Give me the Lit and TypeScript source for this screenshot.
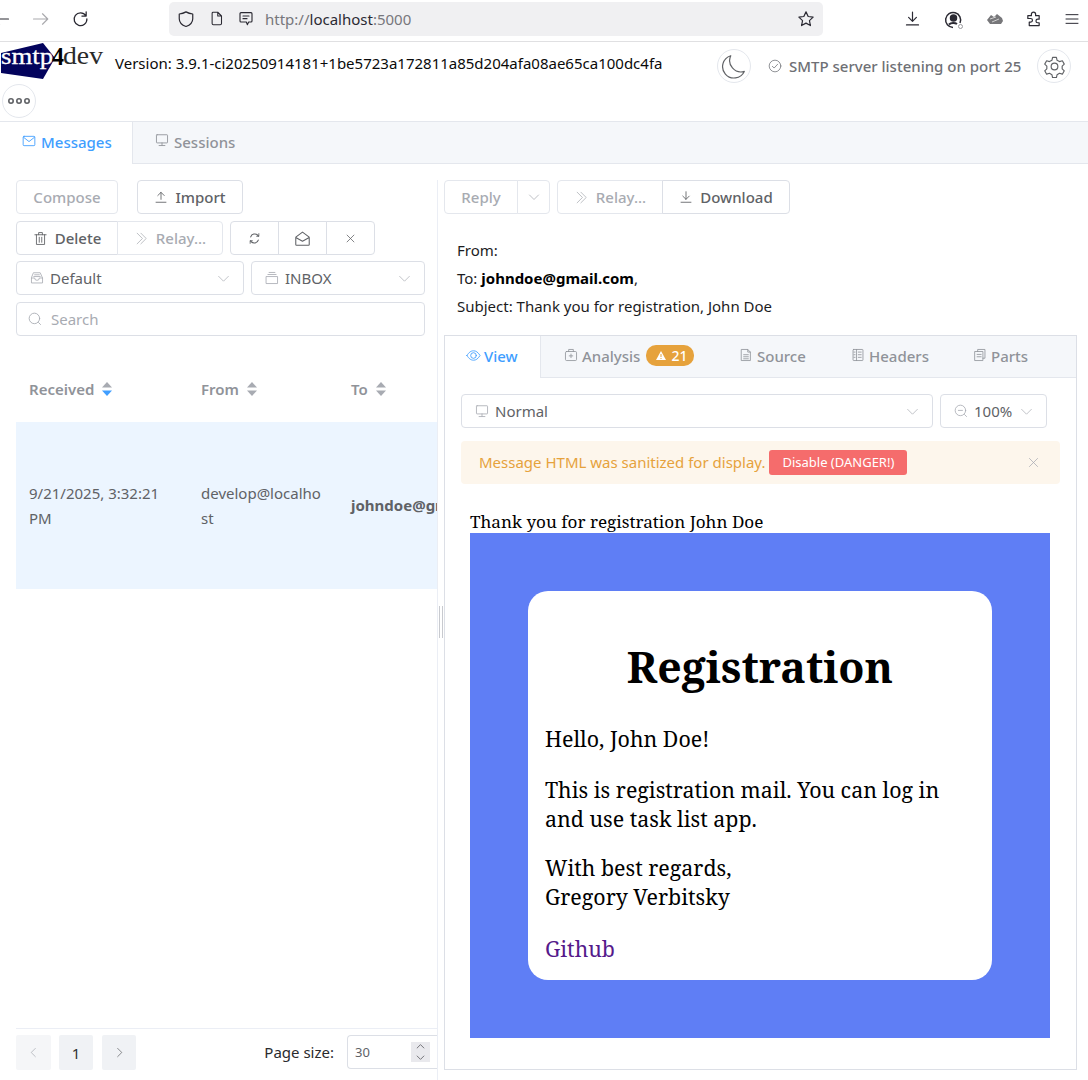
import { LitElement, html, css, svg } from 'lit';
import { customElement } from 'lit/decorators.js';

// outline icon on a 24 box, stroke follows currentColor
const icon = (paths: unknown, size = 14, sw = 1.5) => html`<svg class="ic" width=${size} height=${size} viewBox="0 0 24 24" fill="none" stroke="currentColor" stroke-width=${sw} stroke-linecap="round" stroke-linejoin="round">${paths}</svg>`;

const I = {
  back: svg`<path d="M22 12H3M10 5l-7 7 7 7"/>`,
  reload: svg`<path d="M19.500 8A9 9 0 1 0 21 12.500M20 2.500V8.500H14"/>`,
  shield: svg`<path d="M12 2.500c3 1.800 5.500 2.500 9 2.800v6.200c0 5-3.500 8.500-9 10.500-5.500-2-9-5.500-9-10.500V5.300c3.500-.3 6-1 9-2.800z"/>`,
  page: svg`<path d="M5 3.500a1.500 1.500 0 0 1 1.500-1.500H14l6 6v12a2 2 0 0 1-2 2H7a2 2 0 0 1-2-2zM14 2v6h6"/>`,
  comment: svg`<path d="M3 4a1.500 1.500 0 0 1 1.500-1.500h15A1.500 1.500 0 0 1 21 4v11a1.500 1.500 0 0 1-1.500 1.500H16l-2 4-1.500-4H4.500A1.500 1.500 0 0 1 3 15zM7.500 7.500h9M7.500 11.500h6"/>`,
  star: svg`<path d="M12 2.500l2.900 6.200 6.600.8-4.900 4.600 1.300 6.700L12 17.500l-5.900 3.300 1.300-6.700-4.900-4.600 6.600-.8z"/>`,
  download: svg`<path d="M12 3v13M6.500 10.500l5.500 5.500 5.500-5.500M3.500 21h17"/>`,
  puzzle: svg`<path d="M4 8h5V6a3 3 0 1 1 6 0v2h5v5h-2a2.500 2.500 0 0 0 0 5h2v4H6v-5h2a2.500 2.500 0 0 0 0-5H4z"/>`,
  menu: svg`<path d="M3 5.500h18M3 12h18M3 18.500h18"/>`,
  moon: svg`<path d="M9 2.500A10.500 10.500 0 0 0 21.500 17 10.500 10.500 0 1 1 9 2.500z"/>`,
  check: svg`<circle cx="12" cy="12" r="10"/><path d="M7.500 12.500l3 3 6-6.500"/>`,
  gear: svg`<path d="M10 2.500h4l.7 3 2.500 1.400 3-.9 2 3.500-2.200 2.100v2.800l2.200 2.100-2 3.500-3-.9-2.500 1.400-.7 3h-4l-.7-3-2.500-1.400-3 .9-2-3.500 2.200-2.100v-2.800L1.800 9.500l2-3.500 3 .9 2.500-1.400z"/><circle cx="12" cy="12" r="3.500"/>`,
  mail: svg`<rect x="2" y="4" width="20" height="16" rx="1.500"/><path d="M2.500 5.500L12 13l9.500-7.500"/>`,
  monitor: svg`<rect x="2.500" y="3" width="19" height="14" rx="1"/><path d="M12 17v4M7 21.500h10"/>`,
  upload: svg`<path d="M12 16V4M6.500 9.500L12 4l5.500 5.500M3.500 21h17"/>`,
  trash: svg`<path d="M3 6h18M9 6V2.500h6V6M5.500 6v15.500h13V6M10 10v8M14 10v8"/>`,
  relay: svg`<path d="M5 3.500l8.500 8.500L5 20.500M11 3.500l8.500 8.500-8.500 8.500"/>`,
  refresh: svg`<path d="M5 9a7.800 7.800 0 0 1 13-3l1.500 1.500M19 15a7.800 7.800 0 0 1-13 3L4.500 16.500" stroke-width="2"/><path d="M20 3v5h-4M4 21v-5h4" stroke-width="1.500"/>`,
  open: svg`<path d="M2.500 10L12 3l9.500 7v10.500a1 1 0 0 1-1 1h-17a1 1 0 0 1-1-1zM2.500 10.500L12 16l9.500-5.500"/>`,
  close: svg`<path d="M4.500 4.500l15 15M19.500 4.500l-15 15"/>`,
  tray: svg`<path d="M6.500 3h11l4 9v8.500h-19V12zM2.500 12H8a4 4 0 0 0 8 0h5.500M8 6.500h8M6.500 9.500h11"/>`,
  folder: svg`<path d="M2.500 9.500h19v12h-19zM5 6h14M7 2.500h10"/>`,
  search: svg`<circle cx="11" cy="11" r="9"/><path d="M18 18l3.500 3.500"/>`,
  chevron: svg`<path d="M3 8l9 9 9-9"/>`,
  up: svg`<path d="M3 16l9-9 9 9"/>`,
  left: svg`<path d="M16 3l-9 9 9 9"/>`,
  right: svg`<path d="M8 3l9 9-9 9"/>`,
  eye: svg`<path d="M1.500 12C5 6.500 8 4.500 12 4.500s7 2 10.500 7.500C19 17.500 16 19.500 12 19.500S5 17.500 1.500 12z"/><circle cx="12" cy="12" r="4.500"/>`,
  analysis: svg`<rect x="2.500" y="6" width="19" height="15.500" rx="2"/><path d="M8 6V2.500h8V6M12 10.500v6M9 13.500h6"/>`,
  doc: svg`<path d="M4.500 2.500H15l4.500 4.500v14.500h-15zM15 2.500V7h4.500M8 11.500h8M8 15h8M8 18.500h8"/>`,
  headers: svg`<rect x="3.500" y="2.500" width="17" height="19" rx="1"/><path d="M9.500 2.500v19M12.500 7h5M12.500 11.500h5M12.500 16h5M5 7h2M5 11.500h2M5 16h2"/>`,
  parts: svg`<path d="M8 6V2.500h12.500v15H17M3.500 6H17v15.500H3.500zM7 11h7M7 15h7"/>`,
  zoom: svg`<circle cx="11" cy="11" r="9"/><path d="M18 18l3.500 3.500M7.500 11h7"/>`,
};

@customElement('app-root')
export class AppRoot extends LitElement {
  static styles = css`
    :host {
      display: block;
      width: 1088px;
      height: 1080px;
      overflow: hidden;
      background: #fff;
      font-family: 'Noto Sans', sans-serif;
      font-size: 15px;
      color: #606266;
    }
    * { box-sizing: border-box; }
    .ic { flex: none; display: block; }

    /* browser chrome */
    .chrome {
      height: 42px;
      border-bottom: 1px solid #e0e0e2;
      display: flex;
      align-items: center;
      color: #2b2a33;
      padding-bottom: 4px;
    }
    .nav { display: flex; align-items: center; width: 177px; margin-left: -8px; gap: 22px; flex: none; }
    .nav .off { color: #a9a9ad; }
    .urlbar {
      width: 654px;
      height: 34px;
      background: #f0f0f2;
      border-radius: 5px;
      display: flex;
      align-items: center;
      padding: 0 8px;
      gap: 14px;
      flex: none;
    }
    .url { font-size: 15px; color: #77777c; margin-left: -3px; flex: 1; }
    .url b { font-weight: 400; color: #2b2a33; }
    .tools { display: flex; align-items: center; margin-left: 81px; gap: 22.500px; }
    .pfp { width: 18px; height: 18px; display: grid; place-items: center; }
    .shoe { width: 18px; height: 12px; margin-left: 2px; margin-right: -2px; }

    /* app header */
    .head { height: 79px; padding-left: 1px; }
    .head-top { display: flex; height: 42px; }
    .logo { width: 114px; height: 40px; flex: none; }
    .version { color: #0a0a0a; padding-top: 11px; line-height: 20px; width: 602px; flex: none; white-space: nowrap; }
    .round {
      width: 34px; height: 34px; border-radius: 50%; border: 1px solid #e4e7ed;
      display: grid; place-items: center; background: #fff; color: #606266; flex: none;
    }
    .head-top .round { margin-top: 7px; }
    .status {
      display: flex; align-items: center; gap: 7px; margin: 7px 15px 0 17px; height: 34px; width: 254px; flex: none;
      white-space: nowrap; color: #6e7075; font-weight: 500;
    }
    .more { margin-left: 1px; }

    /* top tabs */
    .tabs {
      height: 43px;
      display: flex;
      background: #f5f7fa;
      border-top: 1px solid #e4e7ed;
      border-bottom: 1px solid #e4e7ed;
    }
    .tab {
      display: flex; align-items: center; gap: 5px; padding: 0 21px 2px 22px; color: #909399; font-weight: 500;
      border-right: 1px solid transparent;
    }
    .tab.on { background: #fff; color: #409eff; border-right-color: #e4e7ed; height: 42px; width: 133px; }
    .tab .ic { margin-top: -3px; }
    .tab + .tab { padding-left: 22px; }

    .main { display: flex; height: 916px; }
    .left {
      width: 438px; flex: none; border-right: 1px solid #ebeef5; padding: 0 0 10px 16px;
      display: flex; flex-direction: column; overflow: hidden; margin-top: 16px;
    }
    .splitter { width: 6px; flex: none; display: flex; align-items: center; justify-content: center; }
    .handle { width: 4px; height: 32px; border-left: 1px solid #c8cacf; border-right: 1px solid #c8cacf; }
    .right { width: 633px; flex: none; padding-top: 16px; display: flex; flex-direction: column; }

    .row { display: flex; gap: 7px; margin-bottom: 7px; width: 409px; }
    .row.tight { margin-bottom: 6px; }
    .btn {
      height: 34px; padding: 0 12px; display: flex; align-items: center; justify-content: center; gap: 7px;
      border: 1px solid #dcdfe6; border-radius: 4px; background: #fff; color: #606266; white-space: nowrap; font-weight: 500;
    }
    .btn.dis { color: #a8abb2; border-color: #e4e7ed; }
    .group { display: flex; }
    .group .btn { border-radius: 0; margin-left: -1px; }
    .group .btn:first-child { border-radius: 4px 0 0 4px; margin-left: 0; }
    .group .btn:last-child { border-radius: 0 4px 4px 0; }
    .select {
      height: 34px; border: 1px solid #dcdfe6; border-radius: 4px; display: flex; align-items: center;
      padding: 0 13px; gap: 6px; color: #606266;
    }
    .select .ic:first-child { color: #a8abb2; }
    .select .chev { margin-left: auto; color: #a8abb2; }
    .search { color: #a8abb2; width: 409px; margin-bottom: 20px; padding-left: 11px; gap: 9px; }

    .thead, .tr { display: grid; grid-template-columns: 172px 150px 200px; width: 522px; }
    .thead { height: 66px; align-items: center; font-weight: 600; color: #909399; }
    .thead > div { padding-left: 13px; display: flex; align-items: center; gap: 8px; }
    .sort { display: block; }
    .tr { height: 167px; align-items: center; background: #ecf5ff; line-height: 25px; }
    .tr > div { padding: 0 13px; }
    .tr .from { word-break: break-all; }
    .tr .to { font-weight: 700; white-space: nowrap; }
    .spacer { flex: 1; }
    .pager { border-top: 1px solid #ebeef5; padding-top: 6px; display: flex; align-items: flex-start; height: 42px; }
    .pg {
      width: 34px; height: 35px; background: #f0f2f5; border-radius: 2px; display: grid; place-items: center;
      margin-right: 9px; color: #303133;
    }
    .pg.dis { background: #f5f6f8; color: #a8abb2; width: 35px; margin-right: 8px; }
    .pg.arrow { color: #606266; margin-right: 0; }
    .size-label { margin: 0 13px 0 auto; line-height: 35px; color: #2a2b2e; }
    .size {
      width: 90px; height: 34px; border: 1px solid #dcdfe6; border-radius: 4px 0 0 4px; border-right: 0;
      display: flex; align-items: center; padding-left: 7px; font-size: 13px; color: #606266;
    }
    .spin {
      margin-left: auto; margin-right: 7px; width: 19px; height: 20px; background: #e9e9ed; color: #6e6e73;
      display: flex; flex-direction: column; align-items: center; justify-content: center; gap: 2px;
    }

    .meta { color: #1c1c1e; padding: 22px 0 15px 13px; line-height: 28px; }
    .meta b { color: #000; }
    .meta .mrow { height: 28px; }
    .panel { border: 1px solid #dcdfe6; height: 735px; }
    .ptabs { display: flex; height: 42px; background: #f5f7fa; border-bottom: 1px solid #e4e7ed; color: #909399; font-weight: 500; }
    .ptab { display: flex; align-items: center; gap: 3px; padding-bottom: 2px; }
    .ptab.on {
      width: 96px; background: #fff; color: #409eff; padding-left: 21px; height: 42px;
      border-right: 1px solid #e4e7ed; margin-right: 23px;
    }
    .ptab .ic { margin-top: -1px; }
    .a { width: 175px; gap: 4px; }
    .s { width: 112px; gap: 4px; }
    .h { width: 122px; gap: 4px; }
    .par { gap: 4px; }
    .badge {
      background: #e6a23c; color: #fff; border-radius: 10px; height: 21px; width: 48px; padding-left: 10px; margin-left: 2px;
      display: flex; align-items: center; gap: 5px; font-size: 14px; line-height: 1;
    }
    .body { padding: 16px 16px 0; }
    .viewrow { display: flex; gap: 7px; margin-bottom: 13px; }
    .alert {
      width: 599px; height: 43px; background: #fdf6ec; border-radius: 4px; color: #e6a23c; padding: 0 18px 1px;
      display: flex; align-items: center; gap: 4px; margin-bottom: 27px;
    }
    .danger {
      background: #f56c6c; color: #fff; font-size: 13px; height: 25px; width: 138px; border-radius: 3px;
      display: grid; place-items: center;
    }
    .alert .x { margin-left: auto; color: #a8abb2; margin-right: 2px; }

    .mail { margin-left: 9px; font-family: 'Noto Serif', 'DejaVu Serif', serif; color: #000; width: 580px; }
    .mail-title { font-size: 17.100px; line-height: 22px; white-space: nowrap; height: 22px; }
    .hero { background: #5f7ef5; height: 505px; padding: 58px; }
    .card { background: #fff; border-radius: 20px; height: 389px; padding: 0 17px; }
    .card h1 { margin: 0; padding-top: 47px; font-size: 42.800px; line-height: 58px; text-align: center; font-weight: 700; }
    .card p { margin: 0; font-size: 21.400px; line-height: 29px; padding-top: 22px; }
    .card p.first { padding-top: 28px; }
    .card p.sign { padding-top: 20px; }
    .card p.link { padding-top: 23px; }
    .card a { color: #551a8b; text-decoration: none; }
  `;

  render() {
    return html`
      <div class="chrome">
        <div class="nav">
          ${icon(I.back, 18, 1.5)}
          <span class="off" style="transform:scaleX(-1)">${icon(I.back, 18, 1.5)}</span>
          ${icon(I.reload, 17, 1.8)}
        </div>
        <div class="urlbar">
          ${icon(I.shield, 18, 1.6)}
          ${icon(I.page, 15, 1.7)}
          ${icon(I.comment, 16, 1.7)}
          <span class="url">http://<b>localhost</b>:5000</span>
          ${icon(I.star, 18, 1.6)}
        </div>
        <div class="tools">
          ${icon(I.download, 17, 1.7)}
          <span class="pfp">
            <svg width="20" height="20" viewBox="0 0 20 20" fill="none" stroke="#2b2a33" stroke-width="1.500">
              <path d="M16 13A7.500 7.500 0 1 0 9 17.500"/><circle cx="9.500" cy="8" r="3" fill="#2b2a33"/><path d="M5 14.500c2-2 6-2 8-.500" stroke-width="2"/>
              <circle cx="16.500" cy="16.500" r="2" stroke="#9a9a9e" stroke-width="1"/>
            </svg>
          </span>
          <svg class="shoe" viewBox="0 0 18 12"><path d="M1 7l4-5 3 2 3-3 5 4 1 3-2 3H4z" fill="#77777a"/><path d="M4 6l6-2M6 9l7-3" stroke="#d0d0d0"/></svg>
          ${icon(I.puzzle, 17, 1.7)}
          ${icon(I.menu, 16, 1.5)}
        </div>
      </div>

      <div class="head">
        <div class="head-top">
          <svg class="logo" viewBox="0 0 114 40">
            <polygon points="0,11 42,1 54,16 42,37 0,31" fill="#03035c"/>
            <text x="0" y="22" font-family="Liberation Serif" font-size="23" fill="#fff" stroke="#fff" stroke-width=".3" textLength="52" lengthAdjust="spacingAndGlyphs">smtp</text>
            <text x="51" y="23" font-family="Liberation Serif" font-size="26" font-weight="700" fill="#000" textLength="12" lengthAdjust="spacingAndGlyphs">4</text>
            <text x="62" y="22" font-family="Liberation Serif" font-size="26" fill="#2a2a2a" textLength="40" lengthAdjust="spacingAndGlyphs">dev</text>
          </svg>
          <div class="version">Version: 3.9.1-ci20250914181+1be5723a172811a85d204afa08ae65ca100dc4fa</div>
          <div class="round">${icon(I.moon, 26, 1.1)}</div>
          <div class="status">${icon(I.check, 14, 1.3)}<span>SMTP server listening on port 25</span></div>
          <div class="round">${icon(I.gear, 23, 1.2)}</div>
        </div>
        <div class="round more">
          <svg width="24" height="8" viewBox="0 0 24 8" fill="none" stroke="#606266" stroke-width="1.600"><circle cx="4" cy="4" r="2.200"/><circle cx="12" cy="4" r="2.200"/><circle cx="20" cy="4" r="2.200"/></svg>
        </div>
      </div>

      <div class="tabs">
        <div class="tab on">${icon(I.mail, 14, 1.5)}<span>Messages</span></div>
        <div class="tab">${icon(I.monitor, 14, 1.5)}<span>Sessions</span></div>
      </div>

      <div class="main">
        <div class="left">
          <div class="row" style="gap:19px">
            <div class="btn dis" style="width:102px">Compose</div>
            <div class="btn" style="width:106px">${icon(I.upload, 14, 1.5)}Import</div>
          </div>
          <div class="row tight">
            <div class="group">
              <div class="btn" style="width:102px">${icon(I.trash, 15, 1.4)}Delete</div>
              <div class="btn dis" style="width:106px">${icon(I.relay, 15, 1.2)}Relay...</div>
            </div>
            <div class="group">
              <div class="btn" style="width:49px">${icon(I.refresh, 13, 1.7)}</div>
              <div class="btn" style="width:49px">${icon(I.open, 17, 1.5)}</div>
              <div class="btn" style="width:49px">${icon(I.close, 11, 1.7)}</div>
            </div>
          </div>
          <div class="row">
            <div class="select" style="width:228px">${icon(I.tray, 14, 1.4)}<span>Default</span>${this.chev()}</div>
            <div class="select" style="width:174px">${icon(I.folder, 14, 1.4)}<span>INBOX</span>${this.chev()}</div>
          </div>
          <div class="select search">${icon(I.search, 14, 1.5)}<span>Search</span></div>

          <div class="thead">
            <div>Received ${this.sort(true)}</div>
            <div>From ${this.sort(false)}</div>
            <div>To ${this.sort(false)}</div>
          </div>
          <div class="tr">
            <div>9/21/2025, 3:32:21 PM</div>
            <div class="from">develop@localhost</div>
            <div class="to">johndoe@gmail.com</div>
          </div>
          <div class="spacer"></div>
          <div class="pager">
            <div class="pg dis">${icon(I.left, 11, 1.6)}</div>
            <div class="pg">1</div>
            <div class="pg arrow">${icon(I.right, 11, 1.6)}</div>
            <div class="size-label">Page size:</div>
            <div class="size">30
              <div class="spin">${icon(I.up, 9, 2.5)}${icon(I.chevron, 9, 2.5)}</div>
            </div>
          </div>
        </div>
        <div class="splitter"><div class="handle"></div></div>
        <div class="right">
          <div class="row" style="width:auto;margin-bottom:0">
            <div class="group">
              <div class="btn dis" style="width:74px">Reply</div>
              <div class="btn dis" style="width:33px">${icon(I.chevron, 12, 1.5)}</div>
            </div>
            <div class="group">
              <div class="btn dis" style="width:106px">${icon(I.relay, 15, 1.2)}Relay...</div>
              <div class="btn" style="width:128px">${icon(I.download, 14, 1.5)}Download</div>
            </div>
          </div>
          <div class="meta">
            <div class="mrow">From:</div>
            <div class="mrow">To: <b>johndoe@gmail.com</b>,</div>
            <div class="mrow">Subject: Thank you for registration, John Doe</div>
          </div>
          <div class="panel">
            <div class="ptabs">
              <div class="ptab on">${icon(I.eye, 15, 1.4)}<span>View</span></div>
              <div class="ptab a">${icon(I.analysis, 14, 1.4)}<span>Analysis</span>
                <span class="badge"><svg width="10" height="9" viewBox="0 0 10 9"><path d="M5 0l5 9H0z" fill="#fff"/><path d="M5 3v3M5 7v1" stroke="#e6a23c"/></svg>21</span></div>
              <div class="ptab s">${icon(I.doc, 14, 1.4)}<span>Source</span></div>
              <div class="ptab h">${icon(I.headers, 14, 1.4)}<span>Headers</span></div>
              <div class="ptab par">${icon(I.parts, 14, 1.4)}<span>Parts</span></div>
            </div>
            <div class="body">
              <div class="viewrow">
                <div class="select" style="width:472px">${icon(I.monitor, 14, 1.4)}<span>Normal</span>${this.chev()}</div>
                <div class="select" style="width:107px;padding-right:13px">${icon(I.zoom, 14, 1.4)}<span>100%</span>${this.chev()}</div>
              </div>
              <div class="alert">
                <span>Message HTML was sanitized for display.</span>
                <span class="danger">Disable (DANGER!)</span>
                <span class="x">${icon(I.close, 13, 1.4)}</span>
              </div>
              <div class="mail">
                <div class="mail-title">Thank you for registration John Doe</div>
                <div class="hero">
                  <div class="card">
                    <h1>Registration</h1>
                    <p class="first">Hello, John Doe!</p>
                    <p>This is registration mail. You can log in and use task list app.</p>
                    <p class="sign">With best regards,<br />Gregory Verbitsky</p>
                    <p class="link"><a href="#">Github</a></p>
                  </div>
                </div>
              </div>
            </div>
          </div>
        </div>
      </div>
    `;
  }

  chev() {
    return html`<span class="chev">${icon(I.chevron, 13, 1.3)}</span>`;
  }

  sort(active: boolean) {
    return html`<svg class="sort" width="10" height="14" viewBox="0 0 10 14">
      <path d="M5 0l5 5.500H0z" fill="#a8abb2" />
      <path d="M5 14l5-5.500H0z" fill=${active ? '#409eff' : '#a8abb2'} />
    </svg>`;
  }
}
